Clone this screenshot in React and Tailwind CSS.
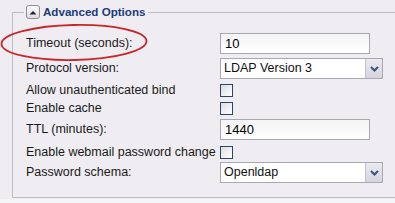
import React from 'react';

const font = { fontFamily: '"Liberation Sans", Arial, sans-serif' };

function TextInput({ value }) {
  return (
    <div className="w-[150px] h-[21px] border border-[#a9a8b2] bg-gradient-to-b from-[#f4f4f6] to-white flex items-center pl-[4px] text-[13px] text-black">
      {value}
    </div>
  );
}

function Select({ value }) {
  return (
    <div className="w-[163px] h-[21px] border border-[#a9a8b2] bg-white flex items-stretch">
      <div className="flex-1 flex items-center pl-[3px] text-[12.5px] text-[#111]">{value}</div>
      <div className="w-[17px] border-l border-[#c3c2cc] bg-gradient-to-b from-[#ebeaf0] to-[#d6d5de] flex items-center justify-center">
        <svg width="9" height="6" viewBox="0 0 9 6">
          <path d="M1 1 L4.5 4.5 L8 1" fill="none" stroke="#35557a" strokeWidth="2" />
        </svg>
      </div>
    </div>
  );
}

function Checkbox() {
  return <div className="w-[13px] h-[13px] border border-[#2c4766] bg-gradient-to-br from-[#dedee2] to-white" />;
}

function Row({ label, className = '', children }) {
  return (
    <div className={`flex items-center ${className}`}>
      <div className="w-[194px] text-[12.5px] text-[#1a1a1a] whitespace-nowrap">{label}</div>
      {children}
    </div>
  );
}

export default function App() {
  return (
    <div className="relative w-[395px] h-[203px] overflow-hidden bg-[#f5f4f7]" style={font}>
      <div className="h-[199px] bg-[#efedf1] pt-[4px] pl-[12px]">
        <fieldset className="w-[400px] border border-[#bdbcc7] pl-[11px] pb-[14px]">
          <legend className="h-[16px] px-[2px] flex items-center gap-[3px]">
            <span className="w-[14px] h-[14px] rounded-[3px] border border-[#8e8d9a] bg-gradient-to-b from-white to-[#dddce4] flex items-center justify-center">
              <svg width="8" height="5" viewBox="0 0 8 5">
                <path d="M0.5 4.5 L4 1 L7.5 4.5 Z" fill="#222" />
              </svg>
            </span>
            <span className="text-[11.6px] font-bold text-[#1d3c78] leading-[16px] pr-[1px]">Advanced Options</span>
          </legend>
          <div className="pl-[2px]">
            <Row label="Timeout (seconds):" className="mt-[13px] h-[21px]">
              <TextInput value="10" />
            </Row>
            <Row label="Protocol version:" className="mt-[4px] h-[21px]">
              <Select value="LDAP Version 3" />
            </Row>
            <Row label="Allow unauthenticated bind" className="mt-[2px] h-[18px]">
              <Checkbox />
            </Row>
            <Row label="Enable cache" className="h-[18px]">
              <Checkbox />
            </Row>
            <Row label="TTL (minutes):" className="mt-[2px] h-[21px]">
              <TextInput value="1440" />
            </Row>
            <Row label="Enable webmail password change" className="mt-[3px] h-[18px]">
              <Checkbox />
            </Row>
            <Row label="Password schema:" className="mt-[1px] h-[21px]">
              <Select value="Openldap" />
            </Row>
          </div>
        </fieldset>
      </div>
      <svg className="absolute left-0 top-[23px]" width="152" height="40" viewBox="0 0 152 40">
        <ellipse cx="74" cy="19.5" rx="72.5" ry="17.5" fill="none" stroke="#c8262d" strokeWidth="1.8" transform="rotate(-1.2 74 19.5)" />
      </svg>
    </div>
  );
}
